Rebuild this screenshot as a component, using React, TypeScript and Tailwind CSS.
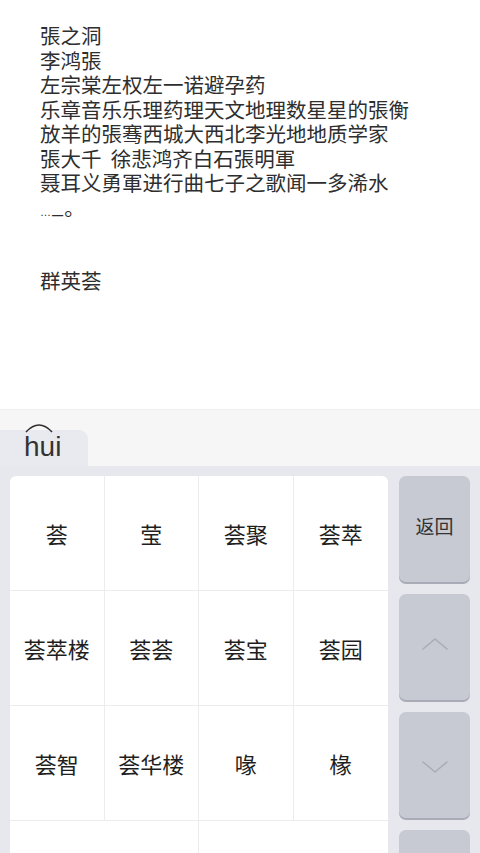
import React from "react";

const lines = [
  "張之洞",
  "李鸿張",
  "左宗棠左权左一诺避孕药",
  "乐章音乐乐理药理天文地理数星星的張衡",
  "放羊的張骞西城大西北李光地地质学家",
  "張大千  徐悲鸿齐白石張明軍",
  "聂耳义勇軍进行曲七子之歌闻一多浠水",
];

const rows = [
  ["荟", "莹", "荟聚", "荟萃"],
  ["荟萃楼", "荟荟", "荟宝", "荟园"],
  ["荟智", "荟华楼", "喙", "椽"],
];

const font = { fontFamily: '"Noto Sans CJK SC", "Noto Sans", sans-serif' };

function Chevron({ up }: { up: boolean }) {
  return (
    <svg width="26" height="14" viewBox="0 0 26 14" fill="none">
      <polyline
        points={up ? "1,12 13,2 25,12" : "1,2 13,12 25,2"}
        stroke="#a9acb6"
        strokeWidth="1.6"
        strokeLinecap="round"
        strokeLinejoin="round"
      />
    </svg>
  );
}

export default function App() {
  return (
    <div
      className="w-[480px] h-[853px] overflow-hidden bg-white flex flex-col"
      style={font}
    >
      {/* Text area */}
      <div className="h-[409px] shrink-0 pl-[40px] pt-[23px] text-[20.5px] leading-[24.5px] text-[#2e2e2e]">
        {lines.map((l, i) => (
          <div key={i} className="whitespace-pre">
            {l}
          </div>
        ))}
        <div className="h-[24.5px] whitespace-nowrap">
          <span className="font-['Liberation_Sans',sans-serif] text-[11px]">…</span>
          <span className="inline-block font-['Liberation_Sans',sans-serif] text-[20px] translate-y-[5px] ml-[1px]">
            –
          </span>
          <span className="ml-[1px]">。</span>
        </div>
        <div className="h-[24.5px]" />
        <div className="h-[24.5px]" />
        <div>群英荟</div>
      </div>

      {/* Pinyin strip */}
      <div className="h-[57px] shrink-0 bg-[#f6f6f7] border-t border-[#efeff1] flex items-end">
        <div className="relative w-[88px] h-[36px] bg-[#e9eaef] rounded-tr-[9px] flex items-end">
          <svg
            className="absolute left-[24px] -top-[8px]"
            width="30"
            height="12"
            viewBox="0 0 30 12"
            fill="none"
          >
            <path
              d="M2 10 Q15 -4 28 10"
              stroke="#2f2f2f"
              strokeWidth="1.6"
              fill="none"
            />
          </svg>
          <span className="pl-[24px] pb-[2px] text-[28px] leading-[34px] font-light text-[#333] font-['Liberation_Sans',sans-serif]">
            hui
          </span>
        </div>
      </div>

      {/* Keyboard body */}
      <div className="flex-1 min-h-0 overflow-hidden bg-[#e7e8ed] flex pt-[10px] pl-[10px] pr-[10px] gap-[11px]">
        <div className="w-[378px] shrink-0 bg-white rounded-t-[6px] flex flex-col">
          {rows.map((r, ri) => (
            <div
              key={ri}
              className="h-[115px] shrink-0 grid grid-cols-4 border-b border-[#ececee]"
            >
              {r.map((c, ci) => (
                <div
                  key={ci}
                  className={
                    "flex items-center justify-center text-[22px] text-[#1e1e1e] " +
                    (ci < 3 ? "border-r border-[#ececee]" : "")
                  }
                >
                  {c}
                </div>
              ))}
            </div>
          ))}
          <div className="h-[60px] shrink-0 grid grid-cols-2">
            <div className="border-r border-[#ececee]" />
            <div />
          </div>
        </div>
        <div className="w-[71px] shrink-0 flex flex-col gap-[12px]">
          <div className="h-[106px] shrink-0 rounded-[7px] bg-[#c7c9d3] shadow-[0_2px_0_#a9abb6] flex items-center justify-center pb-[6px] text-[19px] text-[#333]">
            返回
          </div>
          <div className="h-[106px] shrink-0 rounded-[7px] bg-[#c7c9d3] shadow-[0_2px_0_#a9abb6] flex items-center justify-center pb-[6px]">
            <Chevron up />
          </div>
          <div className="h-[106px] shrink-0 rounded-[7px] bg-[#c7c9d3] shadow-[0_2px_0_#a9abb6] flex items-center justify-center pt-[4px]">
            <Chevron up={false} />
          </div>
          <div className="h-[106px] shrink-0 rounded-[7px] bg-[#c7c9d3] shadow-[0_2px_0_#a9abb6]" />
        </div>
      </div>
    </div>
  );
}
